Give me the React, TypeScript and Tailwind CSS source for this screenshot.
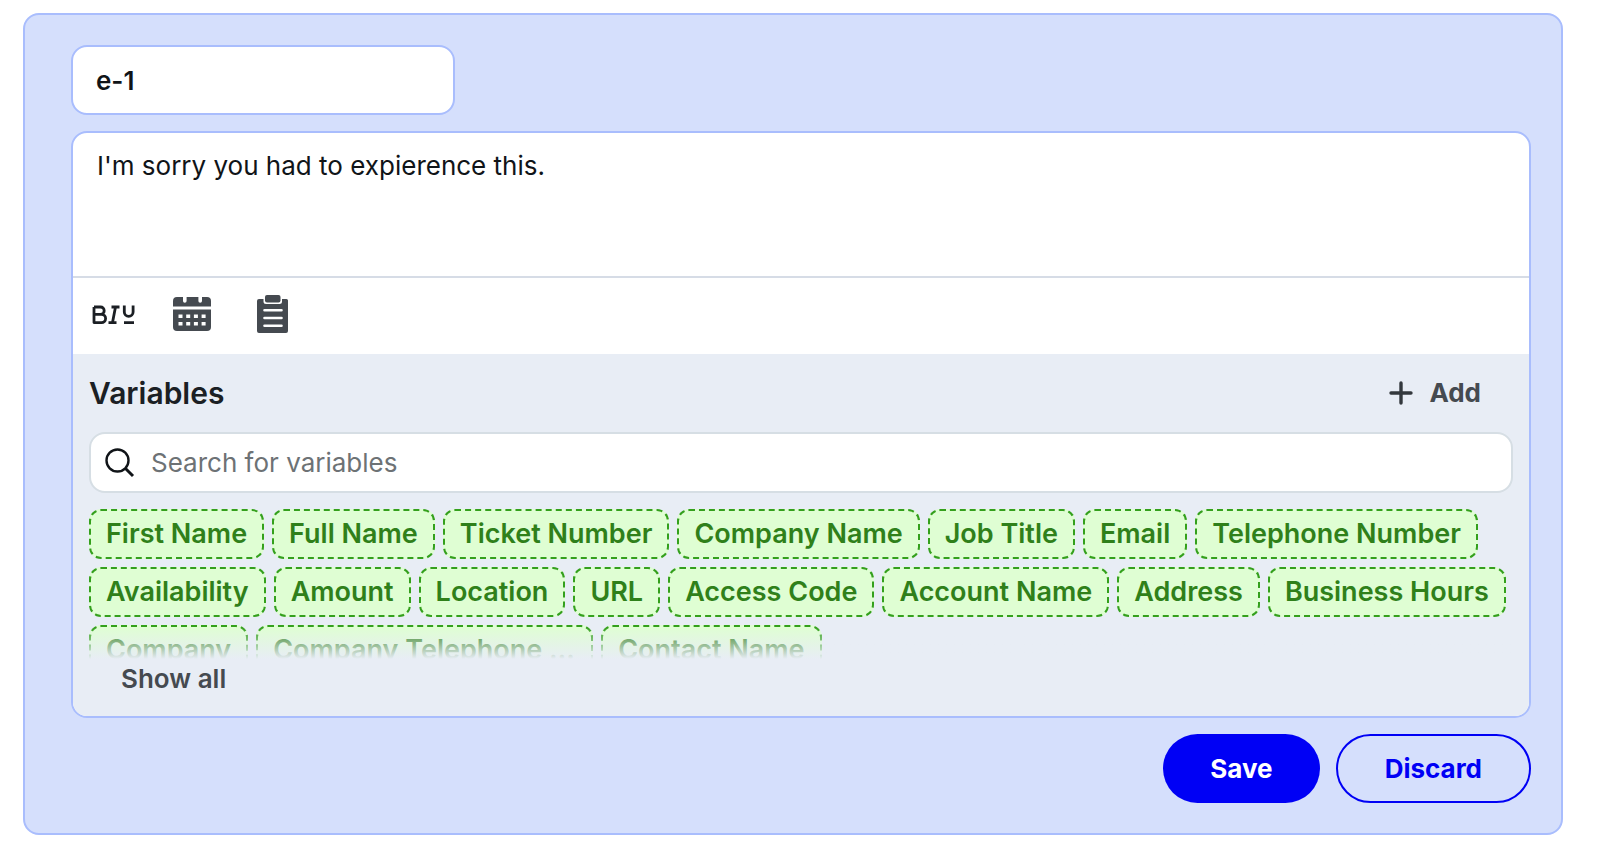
const variables = [
  'First Name',
  'Full Name',
  'Ticket Number',
  'Company Name',
  'Job Title',
  'Email',
  'Telephone Number',
  'Availability',
  'Amount',
  'Location',
  'URL',
  'Access Code',
  'Account Name',
  'Address',
  'Business Hours',
  'Company',
  'Company Telephone Number',
  'Contact Name',
];

function FormatIcon() {
  return (
    <svg width="44" height="24" viewBox="0 0 44 24" fill="none" stroke="#1b1f24" strokeWidth="2.8" strokeLinejoin="round">
      <path d="M3 5h6.500a3.700 3.700 0 0 1 0 7.400H3M3 12.400h7.500a4.100 4.100 0 0 1 0 8.200H3zM3 5v15.600" />
      <path d="M20.500 5h8M17.500 20.600h8M24.500 5l-3 15.600" />
      <path d="M33.300 3.500v6.500a4.400 4.400 0 0 0 8.800 0V3.500M33 20.600h10" />
    </svg>
  );
}

function CalendarIcon() {
  return (
    <svg width="38" height="36" viewBox="0 0 38 36">
      <path
        fill="#454a50"
        d="M4 1h6v4a1.800 1.800 0 0 0 3.600 0V1h11.800v4a1.800 1.800 0 0 0 3.600 0V1h5a4 4 0 0 1 4 4v5.500H0V5a4 4 0 0 1 4-4z"
      />
      <path fill="#454a50" d="M0 13.500h38V31a4 4 0 0 1-4 4H4a4 4 0 0 1-4-4z" />
      <path
        fill="#fff"
        d="M5.500 18.500h4v3.400h-4zM13.200 18.500h4v3.400h-4zM20.900 18.500h4v3.400h-4zM28.600 18.500h4v3.400h-4zM5.500 26h4v3.400h-4zM13.200 26h4v3.400h-4zM20.900 26h4v3.400h-4zM28.600 26h4v3.400h-4z"
      />
    </svg>
  );
}

function ClipboardIcon() {
  return (
    <svg width="32" height="38" viewBox="0 0 32 38">
      <path
        fill="#454a50"
        d="M2 4h4.500v2.500A2.500 2.500 0 0 0 9 9h13.500A2.500 2.500 0 0 0 25 6.500V4h4.500A1.500 1.500 0 0 1 31 5.500V36a2 2 0 0 1-2 2H2a2 2 0 0 1-2-2V6a2 2 0 0 1 2-2z"
      />
      <rect x="8" y="0" width="15.500" height="7.500" rx="2" fill="#454a50" />
      <path stroke="#fff" strokeWidth="2.600" strokeLinecap="round" d="M7.500 15.300h17M7.500 23h17M7.500 30.700h17" />
    </svg>
  );
}

export default function App() {
  return (
    <main className="bg-white pt-[13px] pr-[37px] pb-3 pl-[23px] font-['Inter',sans-serif] text-[26px] leading-8 text-[#101418]">
      <form
        className="rounded-2xl border-2 border-[#a9bdfd] bg-[#d5dffc] py-[30px] pr-[30px] pl-[46px]"
        onSubmit={(e) => e.preventDefault()}
      >
        <input
          aria-label="Name"
          defaultValue="e-1"
          className="block h-[70px] w-[384px] rounded-2xl border-2 border-[#a9bdfd] bg-white px-[23px] font-semibold outline-none"
        />

        <section className="mt-4 overflow-hidden rounded-2xl border-2 border-[#a9bdfd] bg-white">
          <textarea
            aria-label="Message"
            defaultValue="I'm sorry you had to expierence this."
            className="block h-[143px] w-full resize-none px-6 py-[17px] outline-none"
          />
          <div className="flex h-[78px] items-center gap-[38px] border-t-2 border-[#d6dce6] px-[18px] pb-1">
            <button type="button" aria-label="Text format">
              <FormatIcon />
            </button>
            <button type="button" aria-label="Insert date">
              <CalendarIcon />
            </button>
            <button type="button" aria-label="Insert snippet" className="ml-2">
              <ClipboardIcon />
            </button>
          </div>

          <div className="bg-[#e8edf5] px-4 pb-[21px]">
            <div className="flex h-[78px] items-center justify-between pr-8">
              <h2 className="text-[30px] font-semibold text-[#1b1f24]">Variables</h2>
              <button type="button" className="flex items-center gap-4 font-bold text-[#454a50]">
                <svg width="24" height="24" viewBox="0 0 24 24" stroke="#33383d" strokeWidth="3.400" strokeLinecap="round">
                  <path d="M12 2v20M2 12h20" />
                </svg>
                Add
              </button>
            </div>

            <label className="flex h-[61px] items-center gap-4 rounded-2xl border-2 border-[#d6dee4] bg-white px-[14px]">
              <svg width="30" height="30" viewBox="0 0 30 30" fill="none" stroke="#101418" strokeWidth="2.400">
                <circle cx="12.500" cy="12.500" r="11" />
                <path strokeWidth="3" d="M20 20l8 8" />
              </svg>
              <input
                type="text"
                aria-label="Search for variables"
                placeholder="Search for variables"
                className="min-w-0 flex-1 outline-none placeholder:text-[#6d7275]"
              />
            </label>

            <div className="relative mt-4 h-[150px] overflow-hidden">
              <div className="flex flex-wrap gap-2">
                {variables.map((name) => (
                  <button
                    key={name}
                    type="button"
                    className="h-[50px] max-w-[337px] truncate rounded-xl border-2 border-dashed border-[#34a01c] bg-[#dffed3] px-[15px] text-[27px] font-semibold text-[#2f801a]"
                  >
                    {name}
                  </button>
                ))}
              </div>
              <div className="pointer-events-none absolute inset-x-0 bottom-0 h-8 bg-linear-to-b from-[#e8edf5]/0 to-[#e8edf5]" />
            </div>

            <button type="button" className="mt-1 ml-8 block font-semibold text-[#454a50]">
              Show all
            </button>
          </div>
        </section>

        <div className="mt-4 flex justify-end gap-4 font-bold">
          <button type="submit" className="h-[69px] rounded-full bg-[#0000f5] px-[47px] text-white">
            Save
          </button>
          <button type="button" className="h-[69px] rounded-full border-2 border-[#0000f5] px-[47px] text-[#0000f5]">
            Discard
          </button>
        </div>
      </form>
    </main>
  );
}
